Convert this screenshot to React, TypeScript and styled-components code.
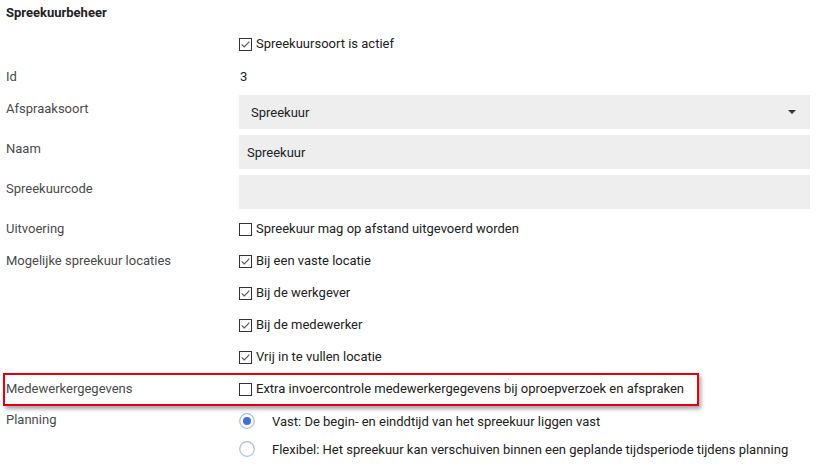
import React from "react";
import styled, { createGlobalStyle } from "styled-components";

const Global = createGlobalStyle`
  html, body { margin: 0; padding: 0; background: #fff; }
  body { font-family: Roboto, "Noto Sans", Arial, sans-serif; font-size: 13px; color: #212121; }
`;

const Page = styled.div`
  width: 822px;
  height: 471px;
  padding: 0 12px 0 6px;
  box-sizing: border-box;
  display: flex;
  flex-direction: column;
  overflow: hidden;
`;

const Title = styled.h1`
  margin: 0;
  font-size: 13px;
  font-weight: 700;
  line-height: 26px;
  height: 28px;
  color: #222;
`;

const Row = styled.div<{ $h?: number; $mt?: number; $top?: boolean; $highlight?: boolean }>`
  position: relative;
  display: grid;
  grid-template-columns: 233px 1fr;
  align-items: ${(p) => (p.$top ? "start" : "center")};
  min-height: ${(p) => p.$h ?? 32}px;
  margin-top: ${(p) => p.$mt ?? 0}px;
  ${(p) =>
    p.$highlight &&
    `&::after {
      content: "";
      position: absolute;
      left: -3px;
      right: 111px;
      top: 0px;
      bottom: -1px;
      border: 2px solid #e5000f;
      box-shadow: 2px 3px 4px rgba(0,0,0,0.35);
      pointer-events: none;
    }`}
`;

const Label = styled.div<{ $pt?: number }>`
  color: #4a4a4a;
  line-height: 18px;
  padding-top: ${(p) => p.$pt ?? 0}px;
`;

const Value = styled.div`
  color: #212121;
  line-height: 18px;
  padding-left: 1px;
`;

const Field = styled.div<{ $pl: number }>`
  height: 34px;
  background: #eeeeee;
  display: flex;
  align-items: center;
  justify-content: space-between;
  padding: 0 14px 0 ${(p) => p.$pl}px;
  box-sizing: border-box;
  color: #212121;
`;

const Arrow = styled.span`
  width: 0;
  height: 0;
  border-left: 4px solid transparent;
  border-right: 4px solid transparent;
  border-top: 4px solid #333;
`;

const CheckLine = styled.label`
  display: flex;
  align-items: center;
  gap: 4px;
  line-height: 18px;
  color: #212121;
`;

const BoxSvg = styled.svg`
  flex: none;
  display: block;
`;

const Check = ({ checked }: { checked: boolean }) => (
  <BoxSvg width="13" height="13" viewBox="0 0 13 13">
    <rect x="0.5" y="0.5" width="12" height="12" fill="#fff" stroke="#333" />
    {checked && <path d="M2.6 6.4 L5.2 9 L10.4 3.6" fill="none" stroke="#555" strokeWidth="1.1" />}
  </BoxSvg>
);

const Options = styled.div`
  display: flex;
  flex-direction: column;
  padding-top: 2px;
`;

const RadioLine = styled.label`
  display: flex;
  align-items: center;
  height: 28px;
  gap: 17px;
  color: #212121;
`;

const Radio = ({ on }: { on: boolean }) => (
  <BoxSvg width="16" height="16" viewBox="0 0 16 16">
    <circle cx="8" cy="8" r="7.3" fill="#fff" stroke="#a8bce6" strokeWidth="1.2" />
    {on && <circle cx="8" cy="8" r="4" fill="#3c6fe0" />}
  </BoxSvg>
);

const Stack = styled.div`
  display: contents;
`;

export default function App() {
  const locaties = ["Bij een vaste locatie", "Bij de werkgever", "Bij de medewerker", "Vrij in te vullen locatie"];
  return (
    <>
      <Global />
      <Page>
        <Title>Spreekuurbeheer</Title>
        <Row>
          <Label />
          <CheckLine><Check checked />Spreekuursoort is actief</CheckLine>
        </Row>
        <Row $mt={1}>
          <Label>Id</Label>
          <Value>3</Value>
        </Row>
        <Row $h={34} $mt={2} $top>
          <Label $pt={5}>Afspraaksoort</Label>
          <Field $pl={12}>Spreekuur<Arrow /></Field>
        </Row>
        <Row $h={34} $mt={6} $top>
          <Label $pt={5}>Naam</Label>
          <Field $pl={8}>Spreekuur</Field>
        </Row>
        <Row $h={34} $mt={6} $top>
          <Label $pt={5}>Spreekuurcode</Label>
          <Field $pl={8} />
        </Row>
        <Row $mt={4}>
          <Label>Uitvoering</Label>
          <CheckLine><Check checked={false} />Spreekuur mag op afstand uitgevoerd worden</CheckLine>
        </Row>
        <Stack>
          {locaties.map((l, i) => (
            <Row key={l}>
              <Label>{i === 0 ? "Mogelijke spreekuur locaties" : ""}</Label>
              <CheckLine><Check checked />{l}</CheckLine>
            </Row>
          ))}
        </Stack>
        <Row $highlight>
          <Label>Medewerkergegevens</Label>
          <CheckLine><Check checked={false} />Extra invoercontrole medewerkergegevens bij oproepverzoek en afspraken</CheckLine>
        </Row>
        <Row $top>
          <Label $pt={6}>Planning</Label>
          <Options>
            <RadioLine><Radio on />Vast: De begin- en einddtijd van het spreekuur liggen vast</RadioLine>
            <RadioLine><Radio on={false} />Flexibel: Het spreekuur kan verschuiven binnen een geplande tijdsperiode tijdens planning</RadioLine>
          </Options>
        </Row>
      </Page>
    </>
  );
}
